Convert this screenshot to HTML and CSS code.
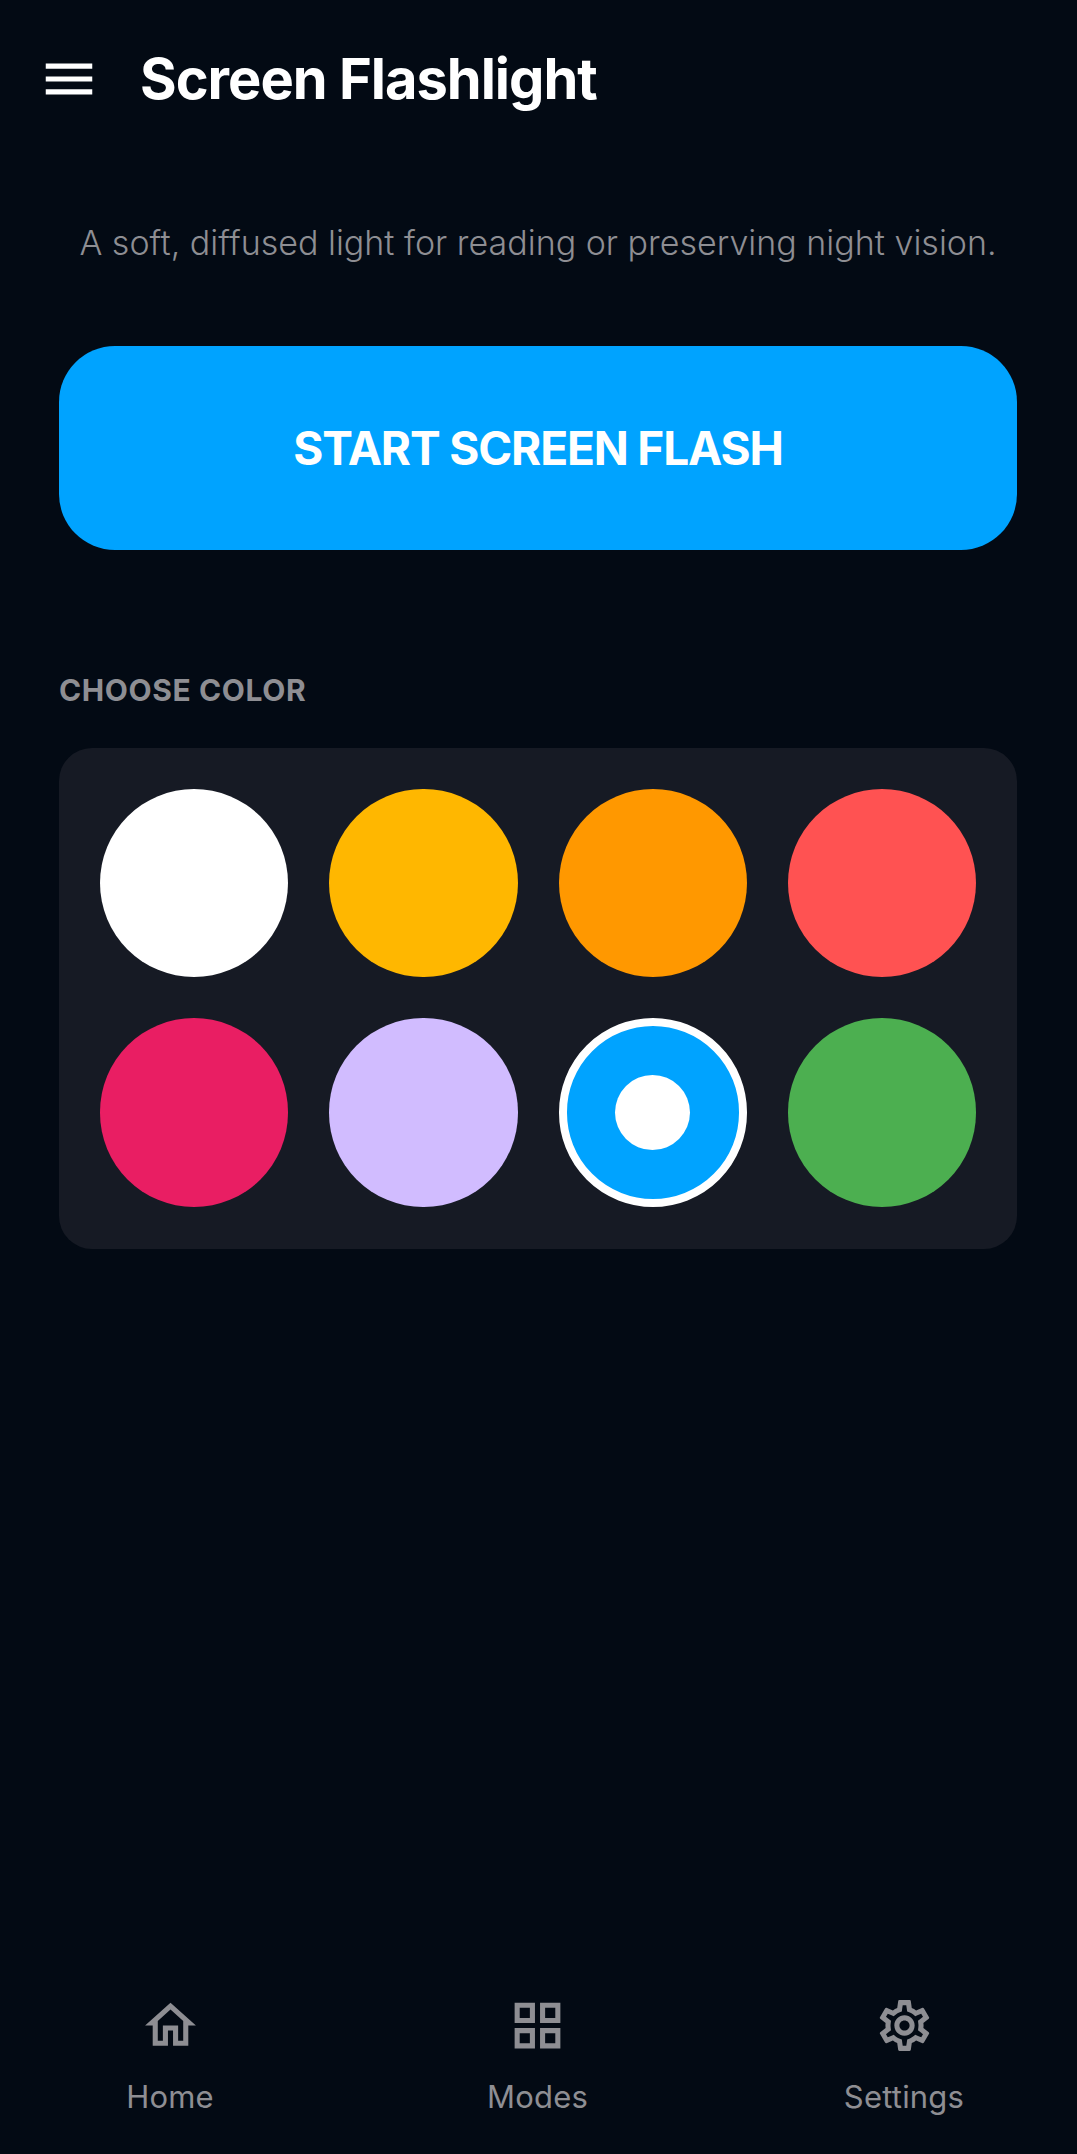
FILE: index.html
```html
<!DOCTYPE html>
<html lang="en">
<head>
<meta charset="utf-8">
<title>Screen Flashlight</title>
<link rel="stylesheet" href="styles.css">
</head>
<body>
<div class="app">
  <header class="topbar">
    <svg class="menu-icon" viewBox="0 0 24 24"><path d="M3 18h18v-2H3v2zm0-5h18v-2H3v2zm0-7v2h18V6H3z"/></svg>
    <h1 class="title">Screen Flashlight</h1>
  </header>
  <main class="content">
    <p class="subtitle">A soft, diffused light for reading or preserving night vision.</p>
    <button class="start">START SCREEN FLASH</button>
    <h2 class="section">CHOOSE COLOR</h2>
    <div class="palette">
      <div class="swatch white"></div>
      <div class="swatch amber"></div>
      <div class="swatch orange"></div>
      <div class="swatch red"></div>
      <div class="swatch pink"></div>
      <div class="swatch lilac"></div>
      <div class="swatch blue selected"><span class="dot"></span></div>
      <div class="swatch green"></div>
    </div>
  </main>
  <nav class="bottomnav">
    <div class="navitem">
      <svg class="nav-icon" viewBox="0 0 24 24"><path d="M12 5.69l5 4.5V18h-2v-6H9v6H7v-7.81l5-4.5M12 3L2 12h3v8h6v-6h2v6h6v-8h3L12 3z"/></svg>
      <span class="navlabel">Home</span>
    </div>
    <div class="navitem">
      <svg class="nav-icon" viewBox="0 0 24 24"><path d="M3 3v8h8V3H3zm6 6H5V5h4v4zm-6 4v8h8v-8H3zm6 6H5v-4h4v4zm4-16v8h8V3h-8zm6 6h-4V5h4v4zm-6 4v8h8v-8h-8zm6 6h-4v-4h4v4z"/></svg>
      <span class="navlabel">Modes</span>
    </div>
    <div class="navitem">
      <svg class="nav-icon" viewBox="0 0 24 24"><path d="M19.43 12.98c.04-.32.07-.64.07-.98 0-.34-.03-.66-.07-.98l2.11-1.65c.19-.15.24-.42.12-.64l-2-3.46c-.09-.16-.26-.25-.44-.25-.06 0-.12.01-.17.03l-2.49 1c-.52-.4-1.08-.73-1.69-.98l-.38-2.65C14.46 2.18 14.25 2 14 2h-4c-.25 0-.46.18-.49.42l-.38 2.65c-.61.25-1.17.59-1.69.98l-2.49-1c-.06-.02-.12-.03-.18-.03-.17 0-.34.09-.43.25l-2 3.46c-.13.22-.07.49.12.64l2.11 1.65c-.04.32-.07.65-.07.98 0 .33.03.66.07.98l-2.11 1.65c-.19.15-.24.42-.12.64l2 3.46c.09.16.26.25.44.25.06 0 .12-.01.17-.03l2.49-1c.52.4 1.08.73 1.69.98l.38 2.65c.03.24.24.42.49.42h4c.25 0 .46-.18.49-.42l.38-2.65c.61-.25 1.17-.59 1.69-.98l2.49 1c.06.02.12.03.18.03.17 0 .34-.09.43-.25l2-3.46c.12-.22.07-.49-.12-.64l-2.11-1.65zm-1.98-1.71c.04.31.05.52.05.73 0 .21-.02.43-.05.73l-.14 1.13.89.7 1.08.84-.7 1.21-1.27-.51-1.04-.42-.9.68c-.43.32-.84.56-1.25.73l-1.06.43-.16 1.13-.2 1.35h-1.4l-.19-1.35-.16-1.13-1.06-.43c-.43-.18-.83-.41-1.23-.71l-.91-.7-1.06.43-1.27.51-.7-1.21 1.08-.84.89-.7-.14-1.13c-.03-.31-.05-.54-.05-.74s.02-.43.05-.73l.14-1.13-.89-.7-1.08-.84.7-1.21 1.27.51 1.04.42.9-.68c.43-.32.84-.56 1.25-.73l1.06-.43.16-1.13.2-1.35h1.39l.19 1.35.16 1.13 1.06.43c.43.18.83.41 1.23.71l.91.7 1.06-.43 1.27-.51.7 1.21-1.07.85-.89.7.14 1.13zM12 8c-2.21 0-4 1.79-4 4s1.79 4 4 4 4-1.79 4-4-1.79-4-4-4zm0 6c-1.1 0-2-.9-2-2s.9-2 2-2 2 .9 2 2-.9 2-2 2z"/></svg>
      <span class="navlabel">Settings</span>
    </div>
  </nav>
</div>
</body>
</html>
```
FILE: styles.css
```css
* { box-sizing: border-box; }
html, body { margin: 0; padding: 0; }
body {
  background: #030a14;
  font-family: Inter, "Liberation Sans", sans-serif;
  color: #fff;
}
.app {
  height: 2154px;
  display: flex;
  flex-direction: column;
}
.topbar {
  display: flex;
  align-items: center;
  height: 158px;
  padding-left: 38px;
  gap: 40px;
}
.menu-icon { width: 62px; height: 62px; fill: #fff; flex: none; }
.title {
  margin: 0;
  font-size: 56px;
  font-weight: 700;
  letter-spacing: -1px;
  line-height: 60px;
}
.content {
  flex: 1;
  padding: 0 60px 0 59px;
}
.subtitle {
  margin: 63px 0 0;
  text-align: center;
  font-size: 34px;
  font-weight: 300;
  line-height: 44px;
  color: #8e8e93;
  white-space: nowrap;
}
.start {
  display: block;
  width: 100%;
  height: 204px;
  margin-top: 81px;
  border: 0;
  border-radius: 56px;
  background: #00a3ff;
  color: #fff;
  font-family: inherit;
  font-size: 46px;
  font-weight: 700;
  letter-spacing: -1.15px;
}
.section {
  margin: 122px 0 0;
  font-size: 30px;
  line-height: 36px;
  font-weight: 700;
  letter-spacing: 0.6px;
  color: #8e8e93;
}
.palette {
  margin-top: 40px;
  padding: 41px 41px 42px;
  background: #161a24;
  border-radius: 33px;
  display: grid;
  grid-template-columns: repeat(4, 1fr);
  gap: 41px;
}
.swatch {
  aspect-ratio: 1;
  border-radius: 50%;
  display: flex;
  align-items: center;
  justify-content: center;
}
.white { background: #fff; }
.amber { background: #ffb700; }
.orange { background: #ff9800; }
.red { background: #ff5252; }
.pink { background: #e91e63; }
.lilac { background: #d1bcff; }
.blue { background: #00a3ff; }
.green { background: #4caf50; }
.selected { border: 8px solid #fff; }
.dot { width: 75px; height: 75px; border-radius: 50%; background: #fff; }
.bottomnav {
  display: grid;
  grid-template-columns: 340px 395px 338px;
  height: 160px;
}
.navitem {
  display: flex;
  flex-direction: column;
  align-items: center;
}
.nav-icon { width: 61px; height: 61px; fill: #8e8e93; margin-top: 1px; }
.navlabel {
  margin-top: 23px;
  font-size: 31px;
  letter-spacing: 0.2px;
  line-height: 36px;
  color: #8e8e93;
}
```
